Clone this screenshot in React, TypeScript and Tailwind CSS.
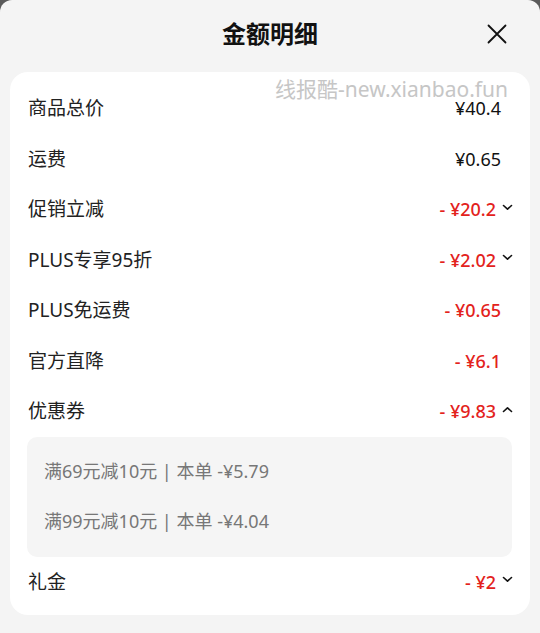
import React from "react";

type Row = {
  label: string;
  value: string;
  red?: boolean;
  chevron?: "down" | "up";
};

const ROWS: Row[] = [
  { label: "商品总价", value: "¥40.4" },
  { label: "运费", value: "¥0.65" },
  { label: "促销立减", value: "- ¥20.2", red: true, chevron: "down" },
  { label: "PLUS专享95折", value: "- ¥2.02", red: true, chevron: "down" },
  { label: "PLUS免运费", value: "- ¥0.65", red: true },
  { label: "官方直降", value: "- ¥6.1", red: true },
  { label: "优惠券", value: "- ¥9.83", red: true, chevron: "up" },
];

const COUPONS = ["满69元减10元 | 本单 -¥5.79", "满99元减10元 | 本单 -¥4.04"];

function Chevron({ dir }: { dir: "down" | "up" }) {
  return (
    <svg width="11" height="7" viewBox="0 0 11 7" className="ml-[6px] -mt-[4px]" fill="none">
      <path
        d={dir === "down" ? "M1.5 1.5 L5.5 5.2 L9.5 1.5" : "M1.5 5.5 L5.5 1.8 L9.5 5.5"}
        stroke="#111"
        strokeWidth="1.6"
        strokeLinecap="round"
        strokeLinejoin="round"
      />
    </svg>
  );
}

function PriceRow({ label, value, red, chevron }: Row) {
  return (
    <div className="h-[50.5px] flex items-center justify-between">
      <span className="text-[19px] text-[#222]">{label}</span>
      <div className={`flex items-center ${chevron ? "" : "mr-[12px]"}`}>
        <span
          className={
            red
              ? "text-[18px] leading-[20px] font-medium text-[#e3221c]"
              : "text-[18px] leading-[20px] text-[#111]"
          }
        >
          {value}
        </span>
        {chevron ? <Chevron dir={chevron} /> : null}
      </div>
    </div>
  );
}

export default function App() {
  return (
    <div
      className="w-[540px] h-[633px] bg-[#5a5a5a]"
      style={{ fontFamily: '"Noto Sans", "Noto Sans CJK SC", sans-serif' }}
    >
      <div className="h-full bg-[#f4f4f4] rounded-t-[12px] px-[10px] relative">
        <header className="h-[68px] flex items-center justify-center relative">
          <h1 className="text-[24px] font-bold text-[#111]">金额明细</h1>
          <button className="absolute right-[23px] top-[24px] w-[20px] h-[20px]">
            <svg width="20" height="20" viewBox="0 0 20 20" fill="none">
              <path d="M1.5 1.5 L18.5 18.5 M18.5 1.5 L1.5 18.5" stroke="#111" strokeWidth="1.8" strokeLinecap="round" />
            </svg>
          </button>
        </header>

        <div className="mt-[4px] bg-white rounded-[18px] pl-[18px] pr-[17px] pt-[11px] pb-[8px] relative">
          <span className="absolute right-[22px] top-[6px] text-[21px] text-[#c6c6c6] leading-[22px] pointer-events-none">
            线报酷-new.xianbao.fun
          </span>

          {ROWS.map((r) => (
            <PriceRow key={r.label} {...r} />
          ))}

          <div className="bg-[#f5f5f5] rounded-[10px] py-[10px] px-[17px] mr-[1px] -ml-[1px]">
            {COUPONS.map((c) => (
              <div key={c} className="h-[50px] flex items-center text-[18px] text-[#777]">
                {c}
              </div>
            ))}
          </div>

          <PriceRow label="礼金" value="- ¥2" red chevron="down" />
        </div>
      </div>
    </div>
  );
}
